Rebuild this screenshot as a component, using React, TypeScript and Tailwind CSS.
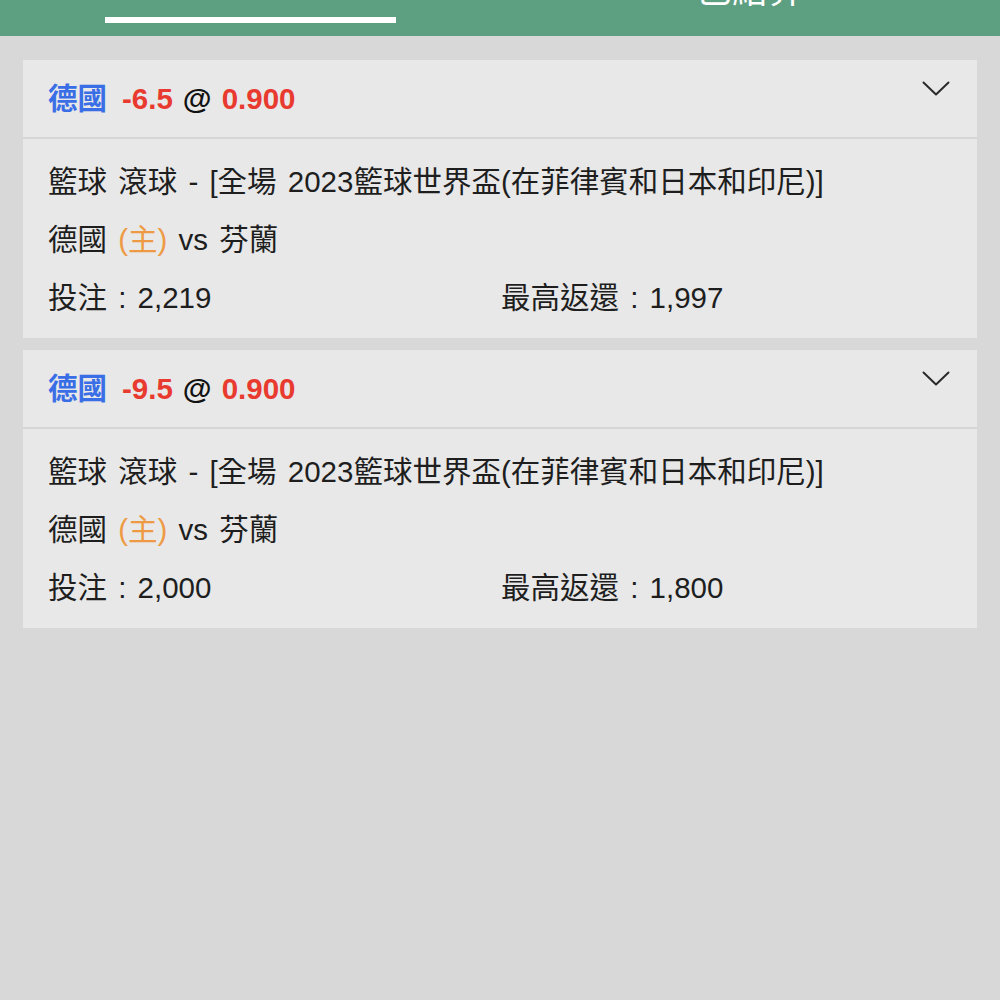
import React from "react";

const FONT = "font-['Liberation_Sans','Noto_Sans_CJK_TC',sans-serif]";

type Bet = {
  team: string;
  line: string;
  odds: string;
  stake: string;
  maxReturn: string;
};

const bets: Bet[] = [
  { team: "德國", line: "-6.5", odds: "0.900", stake: "2,219", maxReturn: "1,997" },
  { team: "德國", line: "-9.5", odds: "0.900", stake: "2,000", maxReturn: "1,800" },
];

function Chevron() {
  return (
    <svg width="28" height="16" viewBox="0 0 28 16" fill="none" className="mt-[21px] shrink-0">
      <path d="M1.5 1.5 L14 13.5 L26.5 1.5" stroke="#2a2a2a" strokeWidth="2" strokeLinecap="round" strokeLinejoin="round" />
    </svg>
  );
}

function BetCard({ bet }: { bet: Bet }) {
  return (
    <div className="bg-[#e8e8e8]">
      {/* header */}
      <div className="flex justify-between h-[77px] pl-[25px] pr-[27px]">
        <div className="flex items-center gap-[15px] text-[29.5px] font-bold leading-none pt-[1px]">
          <span className="text-[#3a6ee6]">{bet.team}</span>
          <span className="flex items-center gap-[10px]">
            <span className="text-[#e83a2f]">{bet.line}</span>
            <span className="text-[#111]">@</span>
            <span className="text-[#e83a2f]">{bet.odds}</span>
          </span>
        </div>
        <Chevron />
      </div>
      <div className="h-[2px] bg-[#d6d6d6]" />
      {/* body */}
      <div className="pl-[25px] pr-[25px] pt-[14px] pb-[11px] text-[29.5px] leading-[58px] text-[#1e1e1e] [word-spacing:3px]">
        <div>籃球 滾球 - [全場 2023籃球世界盃(在菲律賓和日本和印尼)]</div>
        <div>
          德國 <span className="text-[#ee9a45]">(主)</span> vs 芬蘭
        </div>
        <div className="flex">
          <div className="w-[453px]">投注 : {bet.stake}</div>
          <div>最高返還 : {bet.maxReturn}</div>
        </div>
      </div>
    </div>
  );
}

export default function App() {
  return (
    <div className={`${FONT} w-[1000px] h-[1000px] bg-[#d8d8d8] overflow-hidden`}>
      {/* tab bar */}
      <div className="h-[36px] bg-[#5c9f81] flex overflow-hidden">
        <div className="w-1/2 flex justify-center">
          <div className="mt-[17px] w-[291px] h-[6px] bg-white" />
        </div>
        <div className="w-1/2 flex justify-center">
          <div className="-mt-[27px] text-[36px] leading-[36px] text-white">已結算</div>
        </div>
      </div>

      <div className="px-[23px] pt-[24px] flex flex-col gap-[12px]">
        {bets.map((b, i) => (
          <BetCard key={i} bet={b} />
        ))}
      </div>
    </div>
  );
}
